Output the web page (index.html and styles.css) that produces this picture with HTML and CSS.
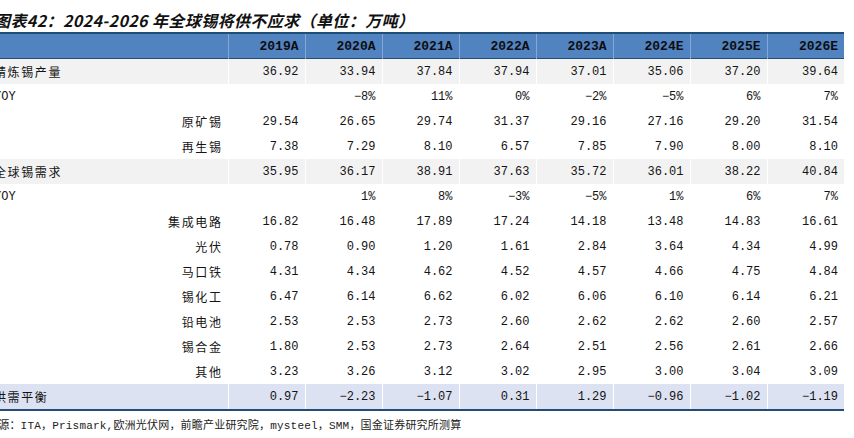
FILE: index.html
```html
<!DOCTYPE html>
<html lang="zh-CN">
<head>
<meta charset="utf-8">
<title>图表42</title>
<link rel="stylesheet" href="styles.css">
</head>
<body>
<div class="page">
  <h1 class="title">图表42：2024-2026 年全球锡将供不应求（单位：万吨）</h1>
  <table class="data">
    <colgroup>
      <col class="c-label">
      <col><col><col><col><col><col><col><col>
    </colgroup>
    <thead>
      <tr>
        <th class="lab"></th>
        <th>2019A</th><th>2020A</th><th>2021A</th><th>2022A</th><th>2023A</th><th>2024E</th><th>2025E</th><th>2026E</th>
      </tr>
    </thead>
    <tbody>
      <tr class="main">
        <td class="lab">精炼锡产量</td>
        <td>36.92</td><td>33.94</td><td>37.84</td><td>37.94</td><td>37.01</td><td>35.06</td><td>37.20</td><td>39.64</td>
      </tr>
      <tr>
        <td class="lab yoy">YOY</td>
        <td></td><td>−8%</td><td>11%</td><td>0%</td><td>−2%</td><td>−5%</td><td>6%</td><td>7%</td>
      </tr>
      <tr>
        <td class="lab sub">原矿锡</td>
        <td>29.54</td><td>26.65</td><td>29.74</td><td>31.37</td><td>29.16</td><td>27.16</td><td>29.20</td><td>31.54</td>
      </tr>
      <tr>
        <td class="lab sub">再生锡</td>
        <td>7.38</td><td>7.29</td><td>8.10</td><td>6.57</td><td>7.85</td><td>7.90</td><td>8.00</td><td>8.10</td>
      </tr>
      <tr class="main">
        <td class="lab">全球锡需求</td>
        <td>35.95</td><td>36.17</td><td>38.91</td><td>37.63</td><td>35.72</td><td>36.01</td><td>38.22</td><td>40.84</td>
      </tr>
      <tr>
        <td class="lab yoy">YOY</td>
        <td></td><td>1%</td><td>8%</td><td>−3%</td><td>−5%</td><td>1%</td><td>6%</td><td>7%</td>
      </tr>
      <tr>
        <td class="lab sub">集成电路</td>
        <td>16.82</td><td>16.48</td><td>17.89</td><td>17.24</td><td>14.18</td><td>13.48</td><td>14.83</td><td>16.61</td>
      </tr>
      <tr>
        <td class="lab sub">光伏</td>
        <td>0.78</td><td>0.90</td><td>1.20</td><td>1.61</td><td>2.84</td><td>3.64</td><td>4.34</td><td>4.99</td>
      </tr>
      <tr>
        <td class="lab sub">马口铁</td>
        <td>4.31</td><td>4.34</td><td>4.62</td><td>4.52</td><td>4.57</td><td>4.66</td><td>4.75</td><td>4.84</td>
      </tr>
      <tr>
        <td class="lab sub">锡化工</td>
        <td>6.47</td><td>6.14</td><td>6.62</td><td>6.02</td><td>6.06</td><td>6.10</td><td>6.14</td><td>6.21</td>
      </tr>
      <tr>
        <td class="lab sub">铅电池</td>
        <td>2.53</td><td>2.53</td><td>2.73</td><td>2.60</td><td>2.62</td><td>2.62</td><td>2.60</td><td>2.57</td>
      </tr>
      <tr>
        <td class="lab sub">锡合金</td>
        <td>1.80</td><td>2.53</td><td>2.73</td><td>2.64</td><td>2.51</td><td>2.56</td><td>2.61</td><td>2.66</td>
      </tr>
      <tr>
        <td class="lab sub">其他</td>
        <td>3.23</td><td>3.26</td><td>3.12</td><td>3.02</td><td>2.95</td><td>3.00</td><td>3.04</td><td>3.09</td>
      </tr>
      <tr class="balance">
        <td class="lab">供需平衡</td>
        <td>0.97</td><td>−2.23</td><td>−1.07</td><td>0.31</td><td>1.29</td><td>−0.96</td><td>−1.02</td><td>−1.19</td>
      </tr>
    </tbody>
  </table>
  <p class="source">来源：ITA，Prismark,欧洲光伏网，前瞻产业研究院，mysteel，SMM，国金证券研究所测算</p>
</div>
</body>
</html>
```

FILE: styles.css
```css
html, body {
  margin: 0;
  padding: 0;
  background: #ffffff;
}

.page {
  width: 860px;
  margin-left: -6px;
  color: #111111;
}

.title {
  margin: 0;
  padding-top: 11px;
  height: 21px;
  font-family: "Noto Sans CJK SC", sans-serif;
  font-size: 16px;
  line-height: 19px;
  font-weight: 700;
  font-style: italic;
  letter-spacing: 0.4px;
  color: #111111;
  white-space: nowrap;
}

.data {
  border-collapse: collapse;
  table-layout: fixed;
  width: 850px;
  font-family: "Liberation Mono", "Noto Sans CJK SC", monospace;
  font-size: 12px;
  border-bottom: 2px solid #1f4e79;
}

.c-label {
  width: 234px;
}

.data thead tr {
  background: #5283c1;
  border-top: 2px solid #1f4e79;
  border-bottom: 1px solid #1f4e79;
}

.data th {
  height: 24px;
  padding: 0 6px 0 0;
  text-align: right;
  font-size: 13px;
  font-weight: 700;
  color: #0d0d0d;
  border-left: 1px solid #86a6d3;
}

.data th.lab {
  border-left: none;
}

.data td {
  height: 25px;
  padding: 0 6px 0 0;
  text-align: right;
  white-space: nowrap;
  border-left: 1px solid #ffffff;
  color: #141414;
}

.data td.lab {
  border-left: none;
  text-align: left;
  padding-left: 0;
  font-family: "Noto Sans CJK SC", sans-serif;
  font-size: 12px;
  letter-spacing: 1.6px;
}

.data td.lab.yoy {
  font-family: "Liberation Mono", monospace;
  letter-spacing: 0;
  padding-left: 0;
}

.data td.lab.sub {
  text-align: right;
  padding-right: 5px;
}

.data tr.main {
  background: #f2f2f2;
}

.data tr.balance {
  background: #dce2f2;
}

.source {
  margin: 8px 0 0 -7px;
  font-family: "Liberation Mono", "Noto Sans CJK SC", monospace;
  font-size: 11px;
  line-height: 14px;
  letter-spacing: 0.2px;
  color: #222222;
  white-space: nowrap;
}
```
